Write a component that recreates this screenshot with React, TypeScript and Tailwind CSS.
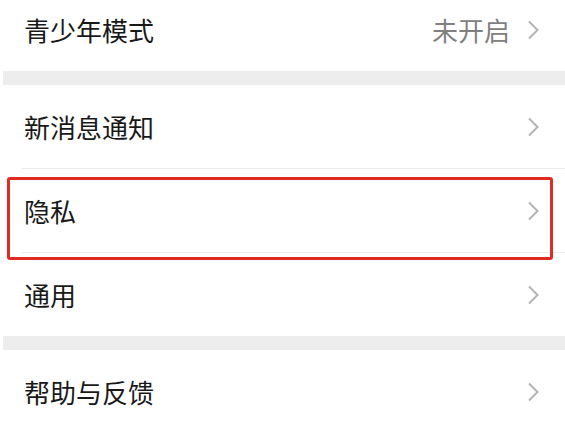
import { ReactNode } from 'react'

function Chevron() {
  return (
    <svg width="12" height="20" viewBox="0 0 12 20" fill="none" className="shrink-0">
      <path d="M2 1.5 L10.5 10 L2 18.5" stroke="#b3b3b3" strokeWidth="2" />
    </svg>
  )
}

function Row({ label, value, first }: { label: string; value?: ReactNode; first?: boolean }) {
  return (
    <div className={`flex items-center h-[83px] pl-6 pr-[26px] ${first ? 'mt-[-12px]' : ''}`}>
      <span className="flex-1 text-[26px] text-[#191919]">{label}</span>
      {value && <span className="text-[26px] text-[#808080] mr-[17px]">{value}</span>}
      <Chevron />
    </div>
  )
}

function Divider() {
  return <div className="h-px ml-[22px] bg-[#ebebeb]" />
}

function Gap() {
  return <div className="h-[14px] ml-[3px] bg-[#ededed]" />
}

export default function App() {
  return (
    <div
      className="relative w-[565px] h-[431px] overflow-hidden bg-white"
      style={{ fontFamily: '"Noto Sans CJK SC", "Noto Sans", sans-serif' }}
    >
      <Row label="青少年模式" value="未开启" first />
      <Gap />
      <Row label="新消息通知" />
      <Divider />
      <Row label="隐私" />
      <Divider />
      <Row label="通用" />
      <Gap />
      <Row label="帮助与反馈" />

      {/* highlight box */}
      <div className="absolute left-[7px] top-[177px] w-[546px] h-[83px] border-[3px] border-[#e02a22] rounded-[3px]" />
    </div>
  )
}
